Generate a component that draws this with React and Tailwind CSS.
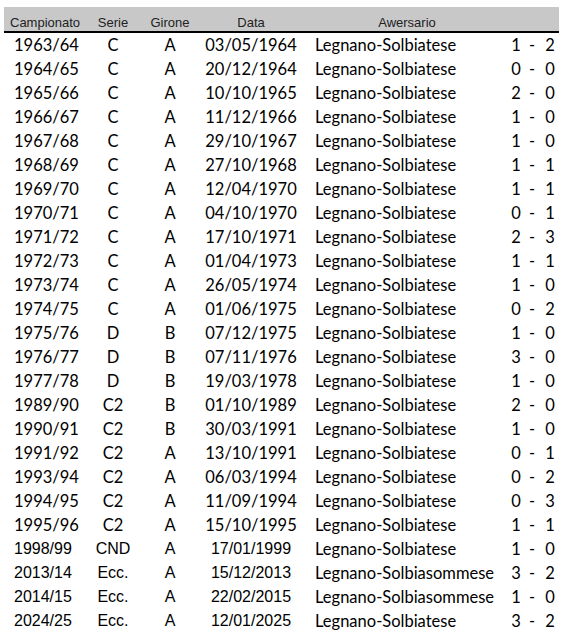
import React from "react";

const rows = [
  ["1963/64", "C", "A", "03/05/1964", "Legnano-Solbiatese", "1", "2"],
  ["1964/65", "C", "A", "20/12/1964", "Legnano-Solbiatese", "0", "0"],
  ["1965/66", "C", "A", "10/10/1965", "Legnano-Solbiatese", "2", "0"],
  ["1966/67", "C", "A", "11/12/1966", "Legnano-Solbiatese", "1", "0"],
  ["1967/68", "C", "A", "29/10/1967", "Legnano-Solbiatese", "1", "0"],
  ["1968/69", "C", "A", "27/10/1968", "Legnano-Solbiatese", "1", "1"],
  ["1969/70", "C", "A", "12/04/1970", "Legnano-Solbiatese", "1", "1"],
  ["1970/71", "C", "A", "04/10/1970", "Legnano-Solbiatese", "0", "1"],
  ["1971/72", "C", "A", "17/10/1971", "Legnano-Solbiatese", "2", "3"],
  ["1972/73", "C", "A", "01/04/1973", "Legnano-Solbiatese", "1", "1"],
  ["1973/74", "C", "A", "26/05/1974", "Legnano-Solbiatese", "1", "0"],
  ["1974/75", "C", "A", "01/06/1975", "Legnano-Solbiatese", "0", "2"],
  ["1975/76", "D", "B", "07/12/1975", "Legnano-Solbiatese", "1", "0"],
  ["1976/77", "D", "B", "07/11/1976", "Legnano-Solbiatese", "3", "0"],
  ["1977/78", "D", "B", "19/03/1978", "Legnano-Solbiatese", "1", "0"],
  ["1989/90", "C2", "B", "01/10/1989", "Legnano-Solbiatese", "2", "0"],
  ["1990/91", "C2", "B", "30/03/1991", "Legnano-Solbiatese", "1", "0"],
  ["1991/92", "C2", "A", "13/10/1991", "Legnano-Solbiatese", "0", "1"],
  ["1993/94", "C2", "A", "06/03/1994", "Legnano-Solbiatese", "0", "2"],
  ["1994/95", "C2", "A", "11/09/1994", "Legnano-Solbiatese", "0", "3"],
  ["1995/96", "C2", "A", "15/10/1995", "Legnano-Solbiatese", "1", "1"],
  ["1998/99", "CND", "A", "17/01/1999", "Legnano-Solbiatese", "1", "0", true],
  ["2013/14", "Ecc.", "A", "15/12/2013", "Legnano-Solbiasommese", "3", "2", true],
  ["2014/15", "Ecc.", "A", "22/02/2015", "Legnano-Solbiasommese", "1", "0", true],
  ["2024/25", "Ecc.", "A", "12/01/2025", "Legnano-Solbiatese", "3", "2", true],
];

const cols = "grid grid-cols-[86px_46px_68px_94px_211px_14px_18px_18px]";
const calibri = "font-['Lato',sans-serif] text-[16.5px]";
const arial = "font-['Liberation_Sans',Arial,sans-serif] text-[16px]";

export default function App() {
  return (
    <div className="w-[563px] h-[636px] bg-white pt-[7px] pl-[4px] text-black">
      {/* header */}
      <div
        className={`${cols} w-[555px] h-[26px] bg-[#c8c8c8] border-b-2 border-black font-['Liberation_Sans',Arial,sans-serif] text-[13px] leading-[15px] text-[#222]`}
      >
        <div className="flex items-end pb-[1px] pl-[6px]">Campionato</div>
        <div className="flex items-end justify-center pb-[1px]">Serie</div>
        <div className="flex items-end justify-center pb-[1px]">Girone</div>
        <div className="flex items-end justify-center pb-[1px]">Data</div>
        <div className="flex items-end justify-center pb-[1px] pl-[7px]">
          Awersario
        </div>
        <div />
        <div />
        <div />
      </div>

      {rows.map((r) => {
        const f = r[7] ? arial : calibri;
        return (
          <div key={r[0]} className={`${cols} h-[24px] items-center leading-[24px]`}>
            <div className={`${f} pl-[10px]`}>{r[0]}</div>
            <div className={`${f} text-center`}>{r[1]}</div>
            <div className={`${f} text-center`}>{r[2]}</div>
            <div className={`${f} text-center`}>{r[3]}</div>
            <div className={`${calibri} pl-[17px] whitespace-nowrap`}>{r[4]}</div>
            <div className={`${calibri} text-center`}>{r[5]}</div>
            <div className={`${calibri} text-center`}>-</div>
            <div className={`${calibri} text-center`}>{r[6]}</div>
          </div>
        );
      })}
    </div>
  );
}
